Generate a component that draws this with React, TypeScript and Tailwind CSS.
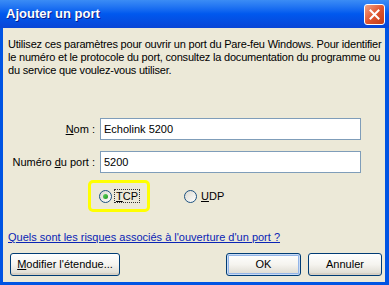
import React from 'react';

const ui = { fontFamily: '"Liberation Sans", Arial, sans-serif' };

function Radio({ checked }: { checked?: boolean }) {
  return (
    <span className="relative inline-flex w-[13px] h-[13px] items-center justify-center rounded-full border border-[#1c5180] bg-gradient-to-br from-[#dcd9cf] to-white">
      {checked && (
        <span className="w-[5px] h-[5px] rounded-full bg-gradient-to-br from-[#5fd35f] to-[#1a961a]" />
      )}
    </span>
  );
}

function XpButton({ children, primary, className = '' }: { children: React.ReactNode; primary?: boolean; className?: string }) {
  return (
    <button
      type="button"
      className={`h-[23px] rounded-[3px] border border-[#003c74] bg-gradient-to-b from-white via-[#f5f4ef] to-[#dcd9cf] text-[11px] text-black ${
        primary ? 'shadow-[inset_0_0_0_1px_#c9dbf5,inset_0_0_0_2px_#93b5e8]' : 'shadow-[inset_0_-2px_0_#d6d0c5]'
      } ${className}`}
    >
      {children}
    </button>
  );
}

export default function App() {
  return (
    <div className="w-[389px] h-[285px] flex flex-col bg-[#0054e3] overflow-hidden" style={ui}>
      {/* title bar */}
      <div className="h-[28px] shrink-0 flex items-center justify-between pl-[6px] pr-[4px] bg-gradient-to-b from-[#3b8cf5] via-[#0058ee] to-[#0845d6]">
        <span className="text-white text-[13px] font-bold [text-shadow:1px_1px_#0a1e8c]">Ajouter un port</span>
        <span className="w-[21px] h-[21px] rounded-[3px] border border-white bg-gradient-to-br from-[#f0a285] via-[#e0552f] to-[#c23d17] flex items-center justify-center">
          <svg width="11" height="11" viewBox="0 0 11 11">
            <path d="M1.5 1.5 L9.5 9.5 M9.5 1.5 L1.5 9.5" stroke="white" strokeWidth="2" strokeLinecap="square" />
          </svg>
        </span>
      </div>

      {/* body */}
      <div className="flex-1 mx-[3px] mr-[4px] mb-[3px] bg-[#ece9d8] flex flex-col pl-[5px] pt-[10px] text-[11px] text-black">
        <p className="leading-[13px] whitespace-nowrap tracking-[-0.2px]">
          Utilisez ces paramètres pour ouvrir un port du Pare-feu Windows. Pour identifier
          <br />
          le numéro et le protocole du port, consultez la documentation du programme ou
          <br />
          du service que voulez-vous utiliser.
        </p>

        <div className="mt-[41px] grid grid-cols-[87px_261px] gap-x-[5px] gap-y-[11px] items-center">
          <label className="text-right">
            <span className="underline">N</span>om :
          </label>
          <div className="h-[22px] border border-[#7f9db9] bg-white flex items-center px-[3px]">Echolink 5200</div>
          <label className="text-right whitespace-nowrap">
            Numéro <span className="underline">d</span>u port :
          </label>
          <div className="h-[22px] border border-[#7f9db9] bg-white flex items-center px-[3px]">5200</div>
        </div>

        <div className="mt-[7px] ml-[80px] flex items-center">
          <div className="w-[62px] h-[32px] border-[3px] border-[#ffff00] rounded-[5px] flex items-center pl-[8px]">
            <Radio checked />
            <span className="ml-[3px] px-[1px] outline outline-1 outline-dotted outline-[#333] leading-[12px]">
              <span className="underline">T</span>CP
            </span>
          </div>
          <div className="ml-[34px] flex items-center">
            <Radio />
            <span className="ml-[4px]">
              <span className="underline">U</span>DP
            </span>
          </div>
        </div>

        <a className="mt-[19px] text-[#0a24b5] underline leading-[13px] w-fit">
          Quels sont les risques associés à l'ouverture d'un port ?
        </a>

        <div className="mt-[9px] flex items-center pr-[3px]">
          <XpButton className="w-[110px] ml-[2px]">
            <span className="underline">M</span>odifier l'étendue...
          </XpButton>
          <XpButton primary className="w-[75px] ml-auto">OK</XpButton>
          <XpButton className="w-[74px] ml-[7px]">Annuler</XpButton>
        </div>
      </div>
    </div>
  );
}
